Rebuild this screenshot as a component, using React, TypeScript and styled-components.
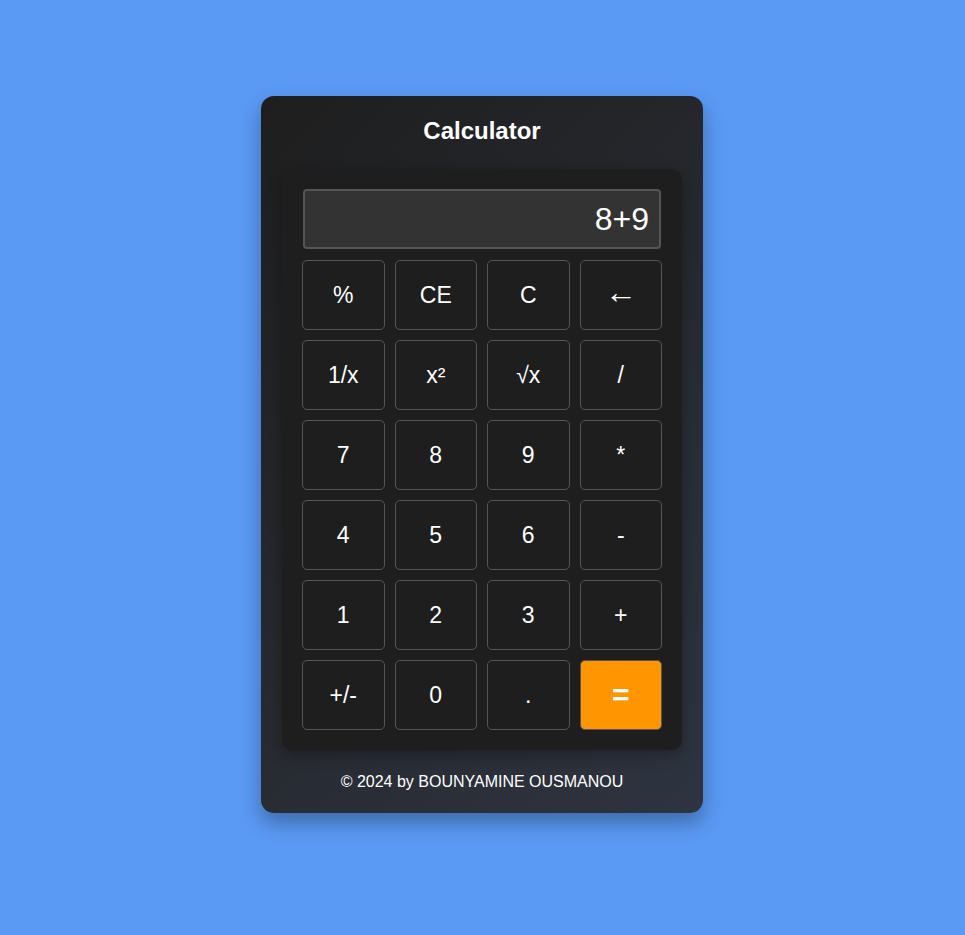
import React from "react";
import styled, { createGlobalStyle } from "styled-components";

const Global = createGlobalStyle`
  html, body { margin: 0; padding: 0; }
  body {
    background: #5a99f4;
    font-family: "Liberation Sans", Arial, sans-serif;
    min-height: 935px;
  }
`;

const Page = styled.div`
  display: flex;
  justify-content: center;
  padding: 96px 1px 0 0;
`;

const Card = styled.div`
  width: 442px;
  box-sizing: border-box;
  padding: 21px 21px 21px;
  border-radius: 13px;
  background: linear-gradient(135deg, #1e1e1e 0%, #2e3440 100%);
  box-shadow: 0 10px 20px rgba(0, 0, 0, 0.3);
  display: flex;
  flex-direction: column;
  align-items: stretch;
`;

const Title = styled.h1`
  margin: 0 0 24px;
  font-size: 24px;
  line-height: 28px;
  font-weight: bold;
  color: #ffffff;
  text-align: center;
`;

const Panel = styled.div`
  background: #1e1e1e;
  border-radius: 10px;
  padding: 20px;
  box-shadow: 0 5px 15px rgba(0, 0, 0, 0.3);
  display: flex;
  flex-direction: column;
  gap: 11px;
`;

const Display = styled.div`
  height: 60px;
  box-sizing: border-box;
  margin: 0 1px;
  background: #333333;
  border: 2px solid #555555;
  border-radius: 4px;
  color: #ffffff;
  font-size: 32px;
  display: flex;
  align-items: center;
  justify-content: flex-end;
  padding: 0 10px;
`;

const Grid = styled.div`
  display: grid;
  grid-template-columns: repeat(4, 1fr);
  grid-auto-rows: 70px;
  gap: 10px;
`;

const Key = styled.button<{ $accent?: boolean; $arrow?: boolean }>`
  box-sizing: border-box;
  border: 1px solid #555555;
  border-radius: 5px;
  background: ${(p) => (p.$accent ? "#ff9500" : "#1e1e1e")};
  color: #ffffff;
  font-family: "Liberation Sans", Arial, sans-serif;
  font-size: ${(p) => (p.$accent ? "30px" : p.$arrow ? "32px" : "23px")};
  font-weight: ${(p) => (p.$accent ? "bold" : "normal")};
  display: flex;
  align-items: center;
  justify-content: center;
  padding: 0 0 ${(p) => (p.$arrow ? "5px" : "0")};
  cursor: pointer;
`;

const Footer = styled.p`
  margin: 22px 0 0;
  font-size: 16px;
  line-height: 20px;
  color: #ffffff;
  text-align: center;
`;

const keys = [
  "%", "CE", "C", "←",
  "1/x", "x²", "√x", "/",
  "7", "8", "9", "*",
  "4", "5", "6", "-",
  "1", "2", "3", "+",
  "+/-", "0", ".", "=",
];

export default function App() {
  return (
    <>
      <Global />
      <Page>
        <Card>
          <Title>Calculator</Title>
          <Panel>
            <Display>8+9</Display>
            <Grid>
              {keys.map((k) => (
                <Key key={k} $accent={k === "="} $arrow={k === "←"}>
                  {k}
                </Key>
              ))}
            </Grid>
          </Panel>
          <Footer>© 2024 by BOUNYAMINE OUSMANOU</Footer>
        </Card>
      </Page>
    </>
  );
}
